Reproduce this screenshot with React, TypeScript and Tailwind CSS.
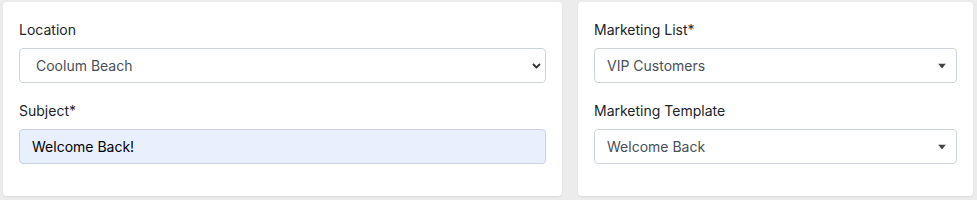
import { ChangeEvent, useState } from 'react'

function Chevron() {
  return (
    <svg width="9" height="6" viewBox="0 0 9 6" className="pointer-events-none absolute right-[5px] top-1/2 -translate-y-1/2">
      <path d="M1 1l3.5 3.5L8 1" fill="none" stroke="#333" strokeWidth="1.8" />
    </svg>
  )
}

function Caret() {
  return (
    <svg width="8" height="5" viewBox="0 0 8 5" className="pointer-events-none absolute right-[10px] top-1/2 -translate-y-1/2">
      <path d="M0 0h8L4 5z" fill="#444" />
    </svg>
  )
}

function Field({ label, children, last }: { label: string; children: React.ReactNode; last?: boolean }) {
  return (
    <div className={last ? '' : 'mb-[17px]'}>
      <label className="block h-[21px] mb-2 text-[14px] leading-[21px] text-[#212529]">{label}</label>
      {children}
    </div>
  )
}

export default function App() {
  const [location, setLocation] = useState('Coolum Beach')
  const [subject, setSubject] = useState('Welcome Back!')

  return (
    <div className="min-h-[200px] bg-[#ececec] pt-[2px] pl-[3px] font-['Inter','Liberation_Sans',sans-serif]">
      <div className="flex gap-[16px] items-stretch">
        <div className="w-[559px] h-[194px] bg-white rounded-[4px] shadow-[0_1px_2px_rgba(0,0,0,0.08)] px-4 pt-[17px]">
          <Field label="Location">
            <div className="relative">
              <select
                value={location}
                onChange={(e: ChangeEvent<HTMLSelectElement>) => setLocation(e.target.value)}
                className="appearance-none w-full h-[35px] border border-[#ced4da] rounded-[4px] pl-4 pr-6 text-[14px] text-[#495057] bg-white outline-none"
              >
                <option>Coolum Beach</option>
                <option>Noosa Heads</option>
                <option>Maroochydore</option>
              </select>
              <Chevron />
            </div>
          </Field>
          <Field label="Subject*" last>
            <input
              value={subject}
              onChange={(e) => setSubject(e.target.value)}
              className="w-full h-[35px] border border-[#c9d3e0] rounded-[4px] px-3 text-[14px] text-black bg-[#e8f0fe] outline-none"
            />
          </Field>
        </div>

        <div className="w-[395px] h-[194px] bg-white rounded-[4px] shadow-[0_1px_2px_rgba(0,0,0,0.08)] px-4 pt-[17px]">
          <Field label="Marketing List*">
            <div className="relative h-[35px] border border-[#ced4da] rounded-[4px] pl-3 flex items-center text-[14px] text-[#495057]">
              VIP Customers
              <Caret />
            </div>
          </Field>
          <Field label="Marketing Template" last>
            <div className="relative h-[35px] border border-[#ced4da] rounded-[4px] pl-3 flex items-center text-[14px] text-[#495057]">
              Welcome Back
              <Caret />
            </div>
          </Field>
        </div>
      </div>
    </div>
  )
}
